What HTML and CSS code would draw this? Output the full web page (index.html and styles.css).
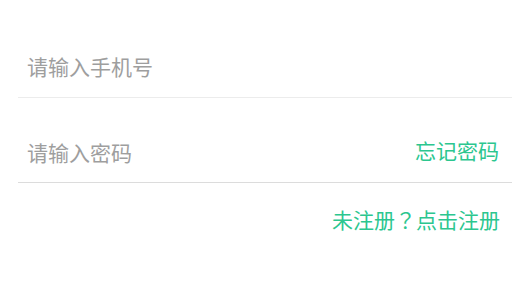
FILE: index.html
```html
<!DOCTYPE html>
<html lang="zh">
<head>
<meta charset="utf-8">
<link rel="stylesheet" href="styles.css">
</head>
<body>
<div class="form">
  <div class="row row-first">
    <span class="placeholder">请输入手机号</span>
  </div>
  <div class="row row-second">
    <span class="placeholder">请输入密码</span>
    <span class="green forgot">忘记密码</span>
  </div>
  <div class="register">
    <span class="green">未注册<span class="qmark" lang="ja">？</span>点击注册</span>
  </div>
</div>
</body>
</html>
```
FILE: styles.css
```css
html, body {
  margin: 0;
  padding: 0;
  background: #ffffff;
}
body {
  font-family: "Noto Sans CJK SC", "Noto Sans", sans-serif;
  font-size: 21px;
}
.form {
  margin: 0 12px 0 18px;
}
.row {
  display: flex;
  align-items: flex-end;
  justify-content: space-between;
  padding: 0 13px 15px 9px;
  line-height: 30px;
}
.row-first {
  height: 51px;
  padding-top: 30px;
  padding-bottom: 16px;
  border-bottom: 1px solid #ececec;
}
.row-second {
  height: 39px;
  padding-top: 30px;
  border-bottom: 1px solid #dcdcdc;
}
.placeholder {
  color: #9e9e9e;
}
.green {
  color: #2cc68f;
}
.qmark {
  font-family: "Noto Sans CJK JP", sans-serif;
}
.forgot {
  margin-bottom: 2px;
}
.register {
  display: flex;
  justify-content: flex-end;
  padding: 21px 12px 0 0;
  line-height: 30px;
}
```
